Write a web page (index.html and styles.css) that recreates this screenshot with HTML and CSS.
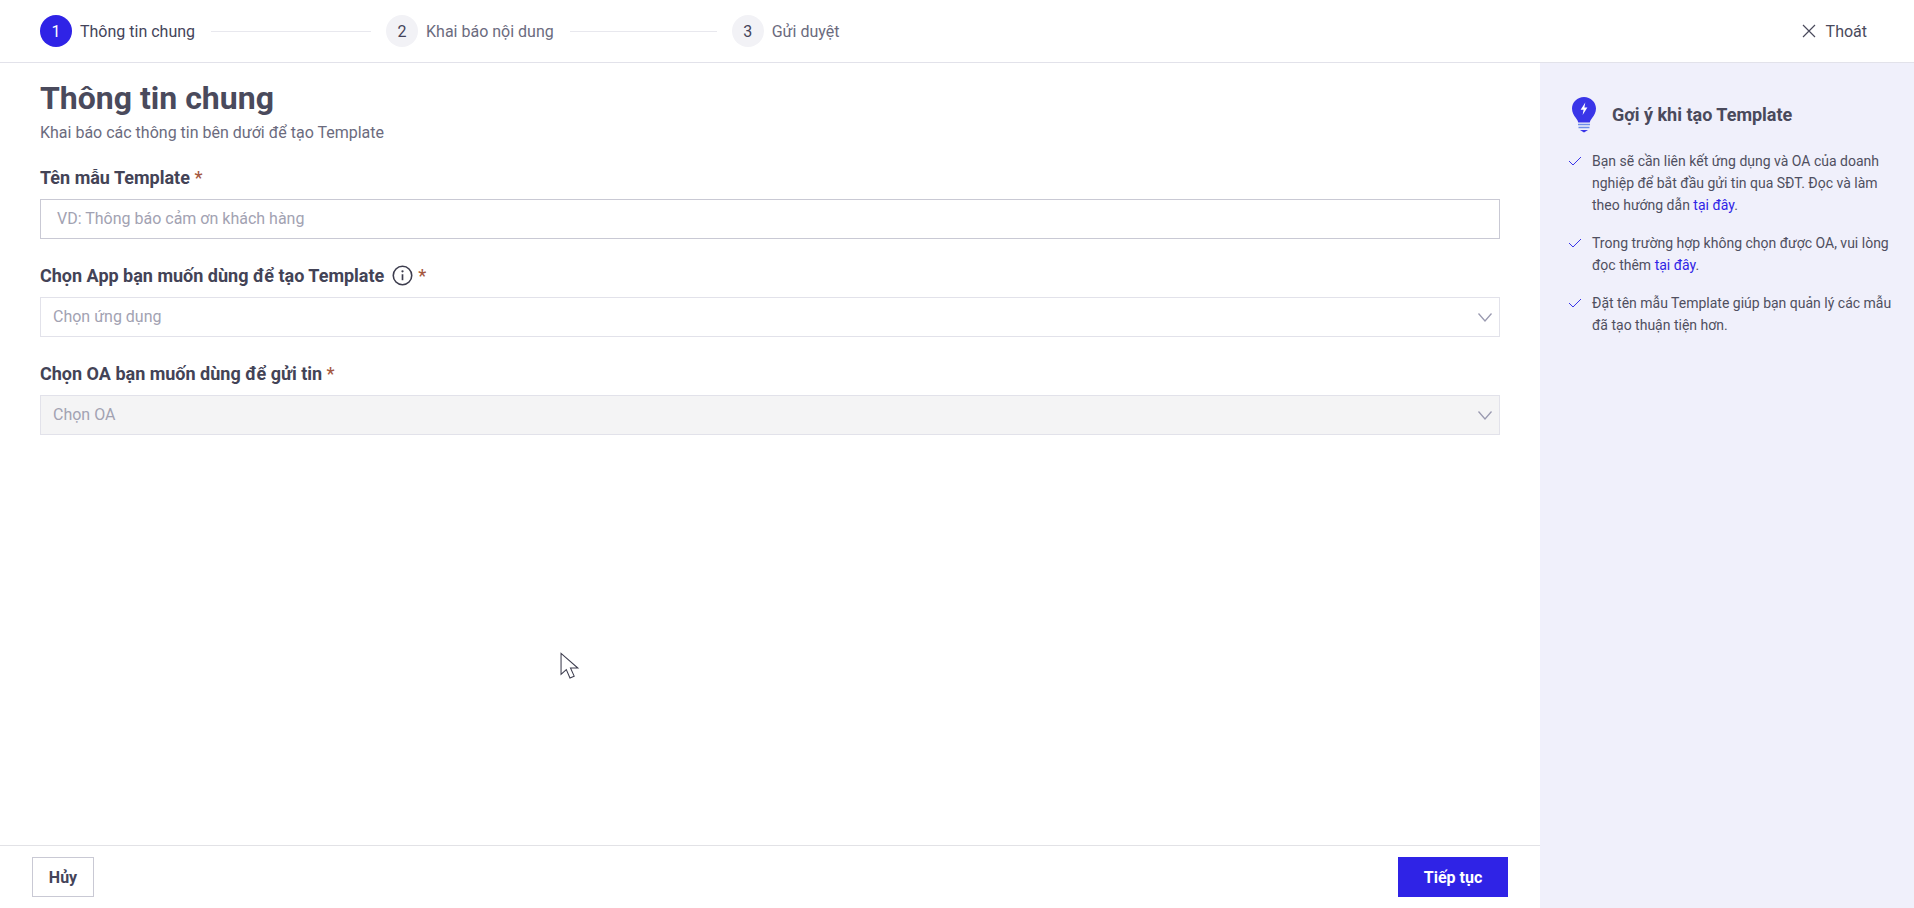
FILE: index.html
```html
<!DOCTYPE html>
<html lang="vi">
<head>
<meta charset="utf-8">
<title>Thông tin chung</title>
<link rel="stylesheet" href="styles.css">
</head>
<body>
<div class="page">
  <header class="topbar">
    <ol class="steps">
      <li class="step step-active"><span class="step-num">1</span><span class="step-label">Thông tin chung</span></li>
      <li class="step-line line-one"></li>
      <li class="step"><span class="step-num">2</span><span class="step-label">Khai báo nội dung</span></li>
      <li class="step-line line-two"></li>
      <li class="step"><span class="step-num">3</span><span class="step-label">Gửi duyệt</span></li>
    </ol>
    <a class="exit">
      <svg class="exit-icon" width="14" height="14" viewBox="0 0 14 14"><path d="M1 1l12 12M13 1L1 13" fill="none" stroke="#4a4a5c" stroke-width="1.2"/></svg>
      <span>Thoát</span>
    </a>
  </header>
  <div class="body">
    <div class="main">
      <main class="content">
        <h1 class="title">Thông tin chung</h1>
        <p class="subtitle">Khai báo các thông tin bên dưới để tạo Template</p>
        <div class="field">
          <div class="label">Tên mẫu Template <span class="req">*</span></div>
          <div class="control control-input"><span class="control-text">VD: Thông báo cảm ơn khách hàng</span></div>
        </div>
        <div class="field">
          <div class="label">Chọn App bạn muốn dùng để tạo Template <svg class="info" width="21" height="21" viewBox="0 0 20 20"><circle cx="10" cy="10" r="8.800" fill="none" stroke="#3d3d4e" stroke-width="1.500"/><path d="M10 8.800v5.700" stroke="#3d3d4e" stroke-width="1.600"/><circle cx="10" cy="6" r="1.100" fill="#3d3d4e"/></svg> <span class="req">*</span></div>
          <div class="control control-select"><span class="control-text">Chọn ứng dụng</span>
            <svg class="chev" width="14" height="9" viewBox="0 0 14 9"><path d="M.5.500L7 8l6.500-7.500" fill="none" stroke="#9a9ab0" stroke-width="1.300"/></svg></div>
        </div>
        <div class="field">
          <div class="label">Chọn OA bạn muốn dùng để gửi tin <span class="req">*</span></div>
          <div class="control control-select control-disabled"><span class="control-text">Chọn OA</span>
            <svg class="chev" width="14" height="9" viewBox="0 0 14 9"><path d="M.5.500L7 8l6.500-7.500" fill="none" stroke="#9a9ab0" stroke-width="1.300"/></svg></div>
        </div>
      </main>
      <footer class="footer">
        <button class="btn btn-ghost">Hủy</button>
        <button class="btn btn-primary">Tiếp tục</button>
      </footer>
    </div>
    <aside class="side">
      <div class="side-head">
        <svg class="bulb" width="24" height="36" viewBox="0 0 24 36">
          <path d="M12 0C5.400 0 0 5.200 0 11.600c0 4 1.900 6.800 3.900 9.400 1.200 1.600 2.100 3 2.300 4.500h11.600c.2-1.500 1.100-2.900 2.300-4.500 2-2.600 3.900-5.400 3.900-9.400C24 5.200 18.600 0 12 0z" fill="#3a35e8"/>
          <path d="M13.300 5.500L8.600 12.800h3l-1 5.200 4.800-7.500h-3z" fill="#fff"/>
          <path d="M6 27.500h12M6.500 30.500h11" stroke="#6f8fe8" stroke-width="1.600"/>
          <path d="M8 33h8l-4 2.500z" fill="#3a35e8"/>
        </svg>
        <h2 class="side-title">Gợi ý khi tạo Template</h2>
      </div>
      <ul class="tips">
        <li class="tip"><svg class="tick" width="14" height="10" viewBox="0 0 14 10"><path d="M1 5l4 4 8-8" fill="none" stroke="#3a35e8" stroke-width="1"/></svg><span>Bạn sẽ cần liên kết ứng dụng và OA của doanh nghiệp để bắt đầu gửi tin qua SĐT. Đọc và làm theo hướng dẫn <a class="link">tại đây</a>.</span></li>
        <li class="tip"><svg class="tick" width="14" height="10" viewBox="0 0 14 10"><path d="M1 5l4 4 8-8" fill="none" stroke="#3a35e8" stroke-width="1"/></svg><span>Trong trường hợp không chọn được OA, vui lòng đọc thêm <a class="link">tại đây</a>.</span></li>
        <li class="tip"><svg class="tick" width="14" height="10" viewBox="0 0 14 10"><path d="M1 5l4 4 8-8" fill="none" stroke="#3a35e8" stroke-width="1"/></svg><span>Đặt tên mẫu Template giúp bạn quản lý các mẫu đã tạo thuận tiện hơn.</span></li>
      </ul>
    </aside>
  </div>
  <svg class="cursor" width="21" height="30" viewBox="0 0 20 28"><path d="M1 1v20l5-4.500 3.500 8 4-1.800-3.500-7.700h7z" fill="#fff" stroke="#3d3d4e" stroke-width="1"/></svg>
</div>
</body>
</html>
```
FILE: styles.css
```css
* { box-sizing: border-box; }
html, body { margin: 0; padding: 0; }
body {
  font-family: Roboto, "Liberation Sans", sans-serif;
  color: #3f3f52;
  background: #fff;
  overflow: hidden;
}
.page { position: relative; width: 1914px; height: 908px; display: flex; flex-direction: column; }
.topbar {
  height: 63px;
  flex: none;
  display: flex;
  align-items: center;
  justify-content: space-between;
  padding: 0 47px 0 40px;
  border-bottom: 1px solid #e2e2ea;
}
.steps { list-style: none; margin: 0; padding: 0; display: flex; align-items: center; }
.step { display: flex; align-items: center; gap: 8px; font-size: 16px; color: #6b6b7e; }
.step-num {
  width: 32px; height: 32px; border-radius: 50%;
  background: #f2f2f6; color: #44445a;
  display: flex; align-items: center; justify-content: center;
  font-size: 16px;
}
.step-active { color: #44445a; }
.step-active .step-num { background: #2f23e6; color: #fff; }
.step-line { height: 1px; background: #e8e8ee; margin: 0 15px 0 16px; }
.line-one { width: 160px; }
.line-two { width: 147px; }
.exit { display: flex; align-items: center; gap: 10px; font-size: 16px; color: #4a4a5c; }
.body { flex: 1; display: flex; min-height: 0; }
.main { flex: 1; display: flex; flex-direction: column; min-width: 0; }
.content { flex: 1; padding: 16px 40px 0; }
.title { margin: 0; font-size: 32px; font-weight: 700; line-height: 38px; color: #4a4a5c; }
.subtitle { margin: 4px 0 0; font-size: 16px; line-height: 24px; color: #6b6b7e; }
.field { margin-top: 20px; }
.subtitle + .field { margin-top: 16px; }
.label { height: 32px; margin-bottom: 6px; padding-top: 1px; line-height: 31px; font-size: 18px; font-weight: 700; color: #434356; }
.req { color: #a5583f; font-weight: 500; }
.info { vertical-align: -4px; margin: 0 1px 0 3px; }
.control {
  height: 40px;
  font-size: 16px;
  color: #a2a2b2;
  display: flex; align-items: center; justify-content: space-between;
  padding: 0 7px 0 12px;
  border: 1px solid #e2e2ea;
  background: #fff;
}
.control-text { margin-top: -1px; }
.control-input { border-color: #c9c9d4; padding: 0 16px; }
.control-disabled { background: #f4f4f5; }
.footer {
  height: 63px;
  flex: none;
  border-top: 1px solid #e2e2e6;
  display: flex; align-items: center; justify-content: space-between;
  padding: 0 32px;
}
.btn { height: 40px; border: 0; font-family: inherit; font-size: 16px; font-weight: 700; padding: 0; }
.btn-ghost { width: 62px; background: #fff; color: #44445a; border: 1px solid #c9c9d4; }
.btn-primary { width: 110px; background: #2f23e6; color: #fff; }
.side { width: 374px; flex: none; background: #f0f0fb; padding: 34px 20px 0 28px; }
.side-head { display: flex; align-items: center; gap: 16px; margin-left: 4px; }
.bulb { flex: none; }
.side-title { margin: -2px 0 0; font-size: 18px; font-weight: 700; color: #4a4a5c; }
.tips { list-style: none; margin: 17px 0 0; padding: 0; display: flex; flex-direction: column; gap: 16px; }
.tip { display: flex; gap: 10px; font-size: 14px; line-height: 22px; color: #4f4f60; }
.tick { flex: none; margin: 6px 0 0; }
.link { color: #2f23e6; }
.cursor { position: absolute; left: 560px; top: 652px; }
```
